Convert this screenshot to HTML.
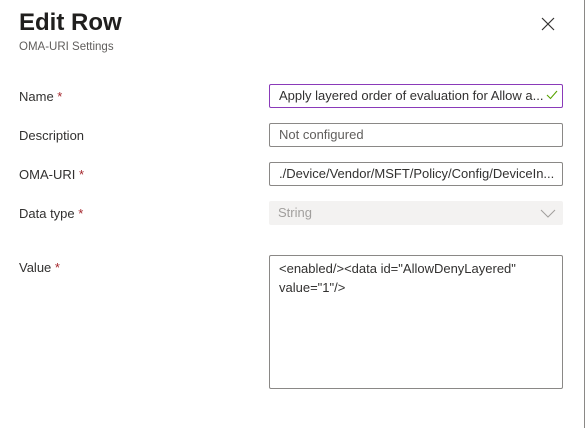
<!DOCTYPE html>
<html><head><style>
body{margin:0;width:585px;height:428px;background:#fff;font-family:"Liberation Sans",sans-serif;position:relative;overflow:hidden;color:#323130}
.a{position:absolute}
.lbl{position:absolute;left:19px;font-size:13px;color:#323130}
.lbl b{color:#a4262c;font-weight:normal}
.box{position:absolute;left:269px;border:1px solid #8a8886;border-radius:2px;font-size:13px;line-height:22px;padding-left:9px;box-sizing:border-box;width:294px;height:24px;white-space:nowrap;overflow:hidden}
</style></head><body>
<div class="a" style="left:19px;top:9px;font-size:24px;font-weight:600;color:#201f1e">Edit Row</div>
<div class="a" style="left:19px;top:41px;font-size:11.5px;color:#605e5c">OMA-URI Settings</div>
<svg class="a" style="left:541px;top:17px" width="14" height="14"><path d="M1 1L13 13M13 1L1 13" stroke="#323130" stroke-width="1.2"/></svg>
<div class="lbl" style="top:89px">Name <b>*</b></div>
<div class="lbl" style="top:128px">Description</div>
<div class="lbl" style="top:167px">OMA-URI <b>*</b></div>
<div class="lbl" style="top:206px">Data type <b>*</b></div>
<div class="lbl" style="top:260px">Value <b>*</b></div>
<div class="box" style="top:84px;border-color:#8a3ab9;padding-right:22px">Apply layered order of evaluation for Allow a...</div>
<svg class="a" style="left:546px;top:90px" width="12" height="10"><path d="M1 5L4.5 8.5L11 1" stroke="#57a300" stroke-width="1.1" fill="none"/></svg>
<div class="box" style="top:123px;color:#605e5c">Not configured</div>
<div class="box" style="top:162px">./Device/Vendor/MSFT/Policy/Config/DeviceIn...</div>
<div class="box" style="top:201px;border:none;background:#f3f2f1;color:#a19f9d;line-height:24px">String</div>
<svg class="a" style="left:540px;top:209px" width="16" height="9"><path d="M1 1L8 8L15 1" stroke="#a19f9d" stroke-width="1" fill="none"/></svg>
<div class="box" style="top:255px;height:134px;white-space:normal;line-height:19px;padding-top:3px;padding-right:8px">&lt;enabled/&gt;&lt;data id="AllowDenyLayered" value="1"/&gt;</div>
<div class="a" style="left:584px;top:0;width:1px;height:428px;background:#8a8886"></div>
</body></html>
